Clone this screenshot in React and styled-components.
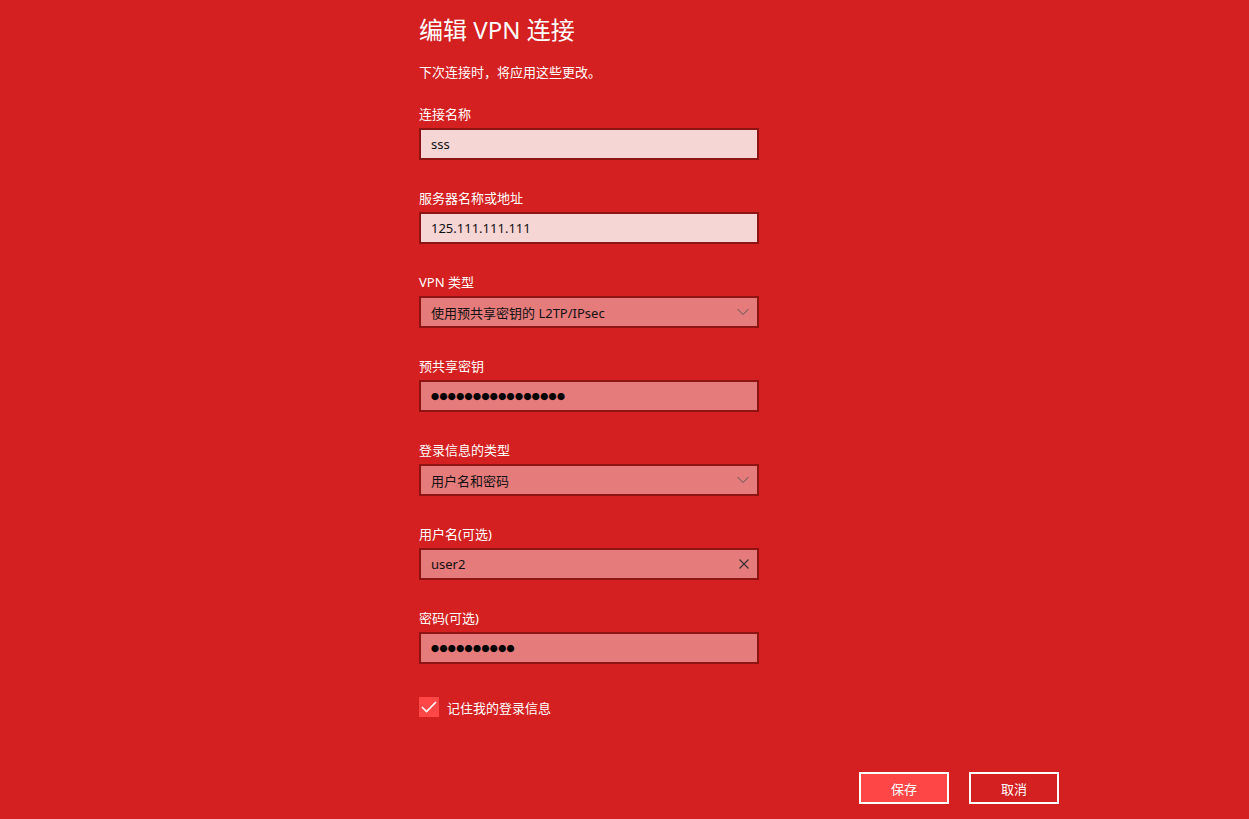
import React from 'react'
import styled, { createGlobalStyle } from 'styled-components'

const GlobalStyle = createGlobalStyle`
  html, body {
    margin: 0;
    padding: 0;
    background: #d42020;
  }
  body {
    font-family: "Noto Sans", "Noto Sans CJK SC", sans-serif;
    color: #ffffff;
  }
`

const Page = styled.div`
  min-height: 819px;
  box-sizing: border-box;
  padding: 12px 0 0 419px;
`

const Panel = styled.div`
  width: 640px;
  display: flex;
  flex-direction: column;
`

const Title = styled.h1`
  margin: 0;
  font-size: 24px;
  font-weight: 400;
  line-height: 36px;
`

const Subtitle = styled.p`
  margin: 14px 0 0;
  font-size: 13px;
  line-height: 20px;
`

const Form = styled.div`
  display: flex;
  flex-direction: column;
  gap: 28px;
  margin-top: 22px;
  width: 340px;
`

const Field = styled.div`
  display: flex;
  flex-direction: column;
  gap: 4px;
`

const Label = styled.label`
  font-size: 13px;
  line-height: 20px;
`

const Box = styled.div`
  height: 32px;
  box-sizing: border-box;
  border: 2px solid #8e1414;
  background: ${p => (p.$light ? '#f6d5d5' : '#e67b7b')};
  display: flex;
  align-items: center;
  padding: 0 8px 0 10px;
  color: #111;
  font-size: 13px;
`

const Value = styled.span`
  flex: 1;
  white-space: nowrap;
`

const Dots = styled.span`
  flex: 1;
  font-size: 8px;
  letter-spacing: 0.4px;
  color: #000;
`

const Check = styled.div`
  display: flex;
  align-items: center;
  gap: 8px;
  margin-top: 33px;
  font-size: 13px;
`

const CheckBox = styled.span`
  width: 20px;
  height: 20px;
  background: #ff4747;
  display: flex;
  align-items: center;
  justify-content: center;
`

const Actions = styled.div`
  display: flex;
  justify-content: flex-end;
  gap: 20px;
  margin-top: 55px;
`

const Button = styled.button`
  width: 90px;
  height: 32px;
  box-sizing: border-box;
  border: 2px solid #ffffff;
  background: ${p => (p.$primary ? '#ff4646' : 'transparent')};
  color: #fff;
  font-family: inherit;
  font-size: 13px;
  padding: 0;
`

const Chevron = () => (
  <svg width="12" height="8" viewBox="0 0 12 8">
    <path d="M0.5 1 L6 6.5 L11.5 1" fill="none" stroke="#555" strokeWidth="1" />
  </svg>
)

const Clear = () => (
  <svg width="10" height="10" viewBox="0 0 10 10">
    <path d="M0.5 0.5 L9.5 9.5 M9.5 0.5 L0.5 9.5" fill="none" stroke="#333" strokeWidth="1.1" />
  </svg>
)

export default function App() {
  return (
    <Page>
      <GlobalStyle />
      <Panel>
        <Title>编辑 VPN 连接</Title>
        <Subtitle>下次连接时，将应用这些更改。</Subtitle>
        <Form>
          <Field>
            <Label>连接名称</Label>
            <Box $light><Value>sss</Value></Box>
          </Field>
          <Field>
            <Label>服务器名称或地址</Label>
            <Box $light><Value>125.111.111.111</Value></Box>
          </Field>
          <Field>
            <Label>VPN 类型</Label>
            <Box><Value>使用预共享密钥的 L2TP/IPsec</Value><Chevron /></Box>
          </Field>
          <Field>
            <Label>预共享密钥</Label>
            <Box><Dots>{'●'.repeat(16)}</Dots></Box>
          </Field>
          <Field>
            <Label>登录信息的类型</Label>
            <Box><Value>用户名和密码</Value><Chevron /></Box>
          </Field>
          <Field>
            <Label>用户名(可选)</Label>
            <Box><Value>user2</Value><Clear /></Box>
          </Field>
          <Field>
            <Label>密码(可选)</Label>
            <Box><Dots>{'●'.repeat(10)}</Dots></Box>
          </Field>
        </Form>
        <Check>
          <CheckBox>
            <svg width="16" height="12" viewBox="0 0 16 12">
              <path d="M1 6 L5.5 10.5 L15 1" fill="none" stroke="#fff" strokeWidth="1.6" />
            </svg>
          </CheckBox>
          记住我的登录信息
        </Check>
        <Actions>
          <Button $primary>保存</Button>
          <Button>取消</Button>
        </Actions>
      </Panel>
    </Page>
  )
}
